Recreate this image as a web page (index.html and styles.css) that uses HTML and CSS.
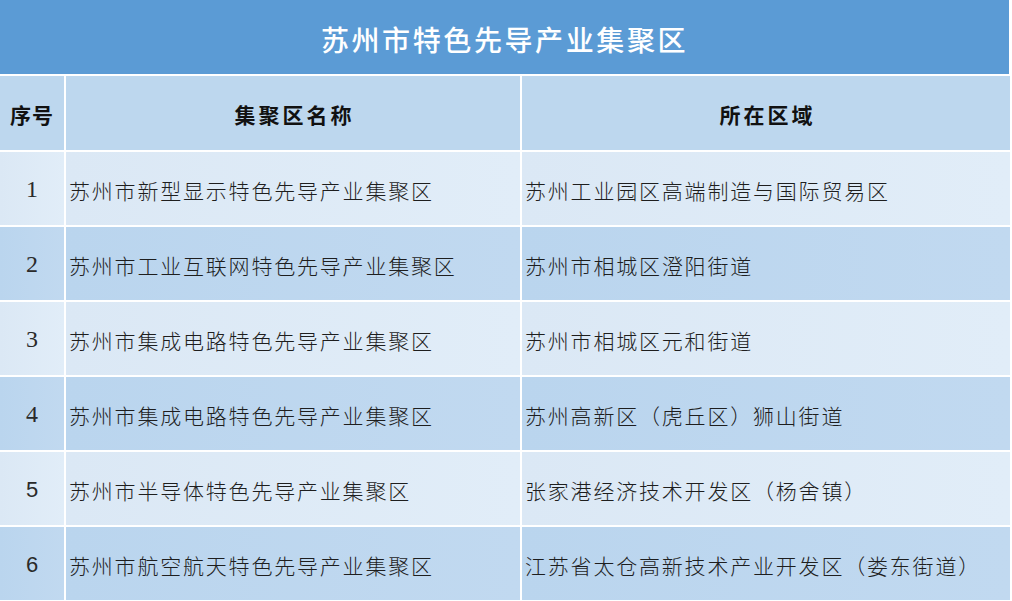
FILE: index.html
```html
<!DOCTYPE html>
<html lang="zh-CN">
<head>
<meta charset="utf-8">
<title>苏州市特色先导产业集聚区</title>
<link rel="stylesheet" href="styles.css">
</head>
<body>
<div class="page">
  <div class="title">苏州市特色先导产业集聚区</div>
  <div class="table">
    <div class="cell head num">序号</div>
    <div class="cell head center">集聚区名称</div>
    <div class="cell head center">所在区域</div>

    <div class="cell light num serif">1</div>
    <div class="cell light">苏州市新型显示特色先导产业集聚区</div>
    <div class="cell light">苏州工业园区高端制造与国际贸易区</div>

    <div class="cell dark num serif">2</div>
    <div class="cell dark">苏州市工业互联网特色先导产业集聚区</div>
    <div class="cell dark">苏州市相城区澄阳街道</div>

    <div class="cell light num serif">3</div>
    <div class="cell light">苏州市集成电路特色先导产业集聚区</div>
    <div class="cell light">苏州市相城区元和街道</div>

    <div class="cell dark num serif">4</div>
    <div class="cell dark">苏州市集成电路特色先导产业集聚区</div>
    <div class="cell dark">苏州高新区（虎丘区）狮山街道</div>

    <div class="cell light num sans">5</div>
    <div class="cell light">苏州市半导体特色先导产业集聚区</div>
    <div class="cell light">张家港经济技术开发区（杨舍镇）</div>

    <div class="cell dark num sans">6</div>
    <div class="cell dark">苏州市航空航天特色先导产业集聚区</div>
    <div class="cell dark">江苏省太仓高新技术产业开发区（娄东街道）</div>
  </div>
</div>
</body>
</html>
```

FILE: styles.css
```css
html, body {
  margin: 0;
  padding: 0;
  background: #ffffff;
}

.page {
  width: 1012px;
  height: 601px;
  overflow: hidden;
  font-family: "Noto Sans CJK SC", "Noto Sans", sans-serif;
  background: #ffffff;
}

.title {
  height: 74px;
  margin-right: 3px;
  background: #5b9bd5;
  color: #ffffff;
  font-size: 28px;
  font-weight: 500;
  letter-spacing: 2.6px;
  display: flex;
  align-items: center;
  justify-content: center;
  padding-top: 4px;
  box-sizing: border-box;
}

.table {
  margin-top: 2px;
  display: grid;
  grid-template-columns: 64px 454px 1fr;
  grid-auto-rows: 73px;
  grid-template-rows: 74px;
  gap: 2px;
  padding-right: 2px;
}

.cell {
  display: flex;
  align-items: center;
  padding-left: 3px;
  padding-top: 2px;
  box-sizing: border-box;
  font-size: 21px;
  font-weight: 300;
  letter-spacing: 1.8px;
  color: #1e1e1e;
  white-space: nowrap;
}

.head {
  background: #bdd7ee;
  font-weight: 700;
  color: #111111;
  letter-spacing: 3px;
  font-size: 21px;
}

.light {
  background: linear-gradient(90deg, #dbe8f5, #e1edf8);
}

.dark {
  background: linear-gradient(90deg, #bad5ee, #c1d9f0);
}

.center {
  justify-content: center;
}

.num {
  justify-content: center;
  padding-left: 0;
}

.head.num {
  letter-spacing: 1px;
}

.serif {
  font-family: "Liberation Serif", serif;
  font-weight: 400;
  font-size: 24px;
  letter-spacing: 0;
  color: #2a2a2a;
}

.sans {
  font-family: "Liberation Sans", sans-serif;
  font-weight: 400;
  font-size: 22px;
  letter-spacing: 0;
  color: #2a2a2a;
}
```
